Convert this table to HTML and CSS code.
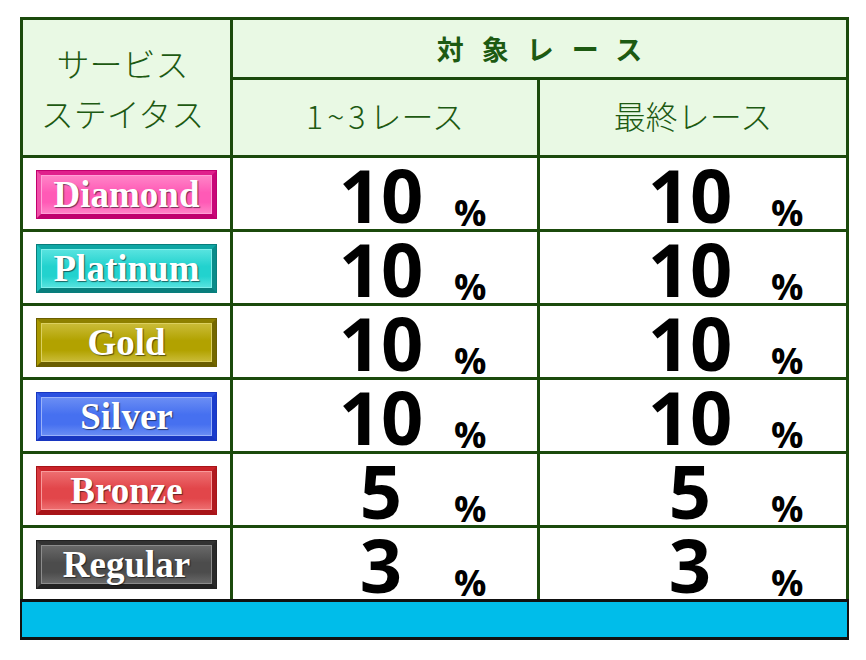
FILE: index.html
```html
<!DOCTYPE html>
<html lang="ja">
<head>
<meta charset="utf-8">
<title>サービスステイタス</title>
<link rel="stylesheet" href="styles.css">
</head>
<body>
<div class="wrap">
  <div class="table">
    <div class="cell head status-head">サービス<br>ステイタス</div>
    <div class="cell head target-head">対象レース</div>
    <div class="cell head sub-head"><span class="range">1~3</span>レース</div>
    <div class="cell head sub-head">最終レース</div>

    <div class="cell badge-cell"><span class="badge diamond">Diamond</span></div>
    <div class="cell num col2"><span class="n">10</span><span class="pct">%</span></div>
    <div class="cell num col3"><span class="n">10</span><span class="pct">%</span></div>

    <div class="cell badge-cell"><span class="badge platinum">Platinum</span></div>
    <div class="cell num col2"><span class="n">10</span><span class="pct">%</span></div>
    <div class="cell num col3"><span class="n">10</span><span class="pct">%</span></div>

    <div class="cell badge-cell"><span class="badge gold">Gold</span></div>
    <div class="cell num col2"><span class="n">10</span><span class="pct">%</span></div>
    <div class="cell num col3"><span class="n">10</span><span class="pct">%</span></div>

    <div class="cell badge-cell"><span class="badge silver">Silver</span></div>
    <div class="cell num col2"><span class="n">10</span><span class="pct">%</span></div>
    <div class="cell num col3"><span class="n">10</span><span class="pct">%</span></div>

    <div class="cell badge-cell"><span class="badge bronze">Bronze</span></div>
    <div class="cell num col2"><span class="n">5</span><span class="pct">%</span></div>
    <div class="cell num col3"><span class="n">5</span><span class="pct">%</span></div>

    <div class="cell badge-cell"><span class="badge regular">Regular</span></div>
    <div class="cell num col2"><span class="n">3</span><span class="pct">%</span></div>
    <div class="cell num col3"><span class="n">3</span><span class="pct">%</span></div>
  </div>
  <div class="footer-bar"></div>
</div>
</body>
</html>
```

FILE: styles.css
```css
html, body {
  margin: 0;
  padding: 0;
  background: #ffffff;
}

.wrap {
  padding: 17px 0 0 20px;
  width: 829px;
}

.table {
  display: grid;
  grid-template-columns: 207px 304px 306px;
  grid-template-rows: 57px 75px repeat(6, 71px);
  gap: 3px;
  padding: 3px 3px 0 3px;
  background: #1b4a0c;
  width: 829px;
  box-sizing: border-box;
}

.cell {
  background: #ffffff;
}

.head {
  background: #e9f9e4;
  color: #1d5a12;
  font-family: "Noto Sans CJK JP", sans-serif;
  font-weight: 300;
  display: flex;
  align-items: center;
  justify-content: center;
  text-align: center;
}

.status-head {
  grid-row: 1 / 3;
  font-size: 33px;
  line-height: 50px;
  padding-right: 8px;
}

.target-head {
  grid-column: 2 / 4;
  font-size: 27px;
  font-weight: bold;
  letter-spacing: 18px;
  padding-left: 18px;
}

.sub-head {
  font-size: 32px;
  padding-bottom: 6px;
}

.range {
  letter-spacing: 4px;
}

.badge-cell {
  display: flex;
  align-items: center;
  justify-content: center;
  padding-top: 2px;
}

.badge {
  width: 179px;
  height: 47px;
  box-sizing: border-box;
  border: 4px solid;
  border-color: var(--d1) var(--d2) var(--d3) var(--l1);
  background: linear-gradient(180deg, var(--l2) 0%, var(--c) 45%, var(--c) 70%, var(--l2) 100%);
  box-shadow: 0 0 0 1px var(--d3), inset 0 0 0 1px var(--l3);
  color: #ffffff;
  font-family: "Liberation Serif", serif;
  font-weight: bold;
  font-size: 37px;
  line-height: 1;
  text-shadow: 1px 1px 1px rgba(0, 0, 0, 0.55);
  display: flex;
  align-items: center;
  justify-content: center;
}

.diamond {
  --c: #ff5ab6; --l2: #ff86c8; --l3: #ff9fd6; --l1: #f04ea8;
  --d1: #e0208c; --d2: #c80878; --d3: #c0006e;
}
.platinum {
  --c: #22d2ce; --l2: #5ae4e0; --l3: #7ef0ec; --l1: #1cc0bc;
  --d1: #0fa6a4; --d2: #0a8c8a; --d3: #087e7c;
}
.gold {
  --c: #b2a200; --l2: #cbbd3a; --l3: #dcd060; --l1: #a89800;
  --d1: #8e8000; --d2: #746800; --d3: #6a5e00;
}
.silver {
  --c: #4670f0; --l2: #6c8ff4; --l3: #9ab2fa; --l1: #3c66ea;
  --d1: #2a50e0; --d2: #1a3ccc; --d3: #1836c0;
}
.bronze {
  --c: #e2464a; --l2: #ee7072; --l3: #f89a9a; --l1: #d83a40;
  --d1: #c82228; --d2: #b01a20; --d3: #a81418;
}
.regular {
  --c: #4c4c4c; --l2: #6a6a6a; --l3: #8c8c8c; --l1: #444444;
  --d1: #333333; --d2: #2a2a2a; --d3: #222222;
}

.num {
  font-family: "Open Sans", sans-serif;
  font-weight: bold;
  color: #000000;
  font-size: 74px;
  line-height: 56px;
  padding-top: 9px;
  white-space: nowrap;
}

.n {
  display: inline-block;
  width: 120px;
  text-align: center;
}

.pct {
  font-size: 36px;
  line-height: 30px;
  vertical-align: -3px;
}

.col2 .n { margin-left: 88px; }
.col2 .pct { margin-left: 13px; }
.col3 .n { margin-left: 90px; }
.col3 .pct { margin-left: 21px; }

.footer-bar {
  height: 41px;
  box-sizing: border-box;
  background: #00bdea;
  border: 3px solid #111111;
  border-left-width: 2px;
  border-right-width: 2px;
}
```
